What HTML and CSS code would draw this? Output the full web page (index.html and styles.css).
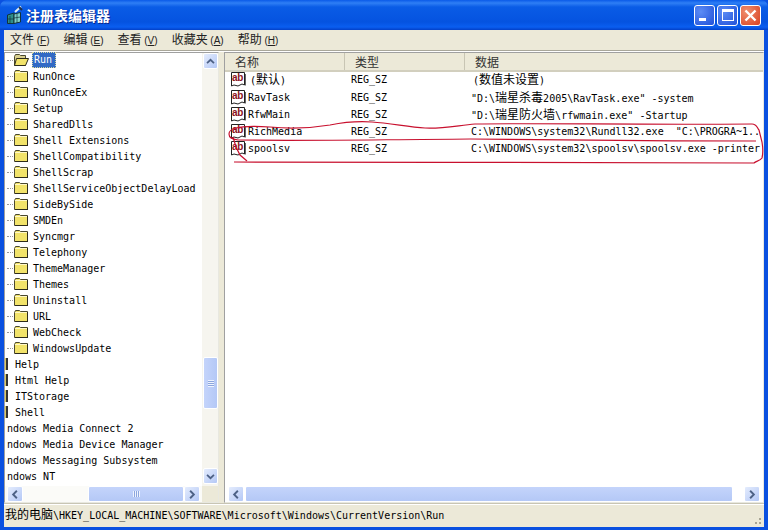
FILE: index.html
```html
<!DOCTYPE html>
<html lang="zh-CN">
<head>
  <meta charset="UTF-8">
  <title>注册表编辑器</title>
  <link rel="stylesheet" href="styles.css">
</head>
<body>

  <svg class="defs" width="0" height="0">
    <symbol id="folder" viewBox="0 0 16 14">
      <path d="M1.5 3.5V12.5H14.5V2.5H7.5L6.5 1.5H2.5Z" fill="#f2e36a" stroke="#4a4830"/>
      <path d="M2 3.5H14" stroke="#fff8c8"/>
      <path d="M14.5 3V13" stroke="#2e2c1c"/>
      <path d="M2 12.5H15" stroke="#2e2c1c"/>
    </symbol>
    <symbol id="folder-open" viewBox="0 0 16 14">
      <path d="M1.5 3.5V12.5H12.5V2.5H7.5L6.5 1.5H2.5Z" fill="#d8cf90" stroke="#4a4830"/>
      <path d="M3.5 5.5H15.5L12.5 12.5H1.5Z" fill="#f2e36a" stroke="#2e2c1c"/>
    </symbol>
    <symbol id="doc" viewBox="0 0 17 17">
      <path d="M1.5 1.5H14.5V14L12 13L8 15L4 14L1.5 15Z" fill="#fff" stroke="#222"/>
      <path d="M15.5 3V14.5" stroke="#666"/>
    </symbol>
    <symbol id="up" viewBox="0 0 15 15"><path d="M3.5 9.5L7.5 5.5L11.5 9.5" fill="none" stroke="#4d6185" stroke-width="2"/></symbol>
    <symbol id="down" viewBox="0 0 15 15"><path d="M3.5 5.5L7.5 9.5L11.5 5.5" fill="none" stroke="#4d6185" stroke-width="2"/></symbol>
    <symbol id="left" viewBox="0 0 15 15"><path d="M9.5 3.5L5.5 7.5L9.5 11.5" fill="none" stroke="#4d6185" stroke-width="2"/></symbol>
    <symbol id="right" viewBox="0 0 15 15"><path d="M5.5 3.5L9.5 7.5L5.5 11.5" fill="none" stroke="#4d6185" stroke-width="2"/></symbol>
  </svg>

  <div class="window">
    <div class="titlebar">
      <svg class="app-icon" width="18" height="20" viewBox="0 0 18 20">
        <path d="M1.5 10L8 8V18.5H1.5Z" fill="#2f8f8a" stroke="#12323a"/>
        <path d="M8 9L14.5 7.5V17L8 18.5Z" fill="#7fd0c8" stroke="#12323a"/>
        <path d="M4 11V18M1.5 14H8M11 9V18M8 13L14.5 12" stroke="#12323a" stroke-width=".7"/>
        <path d="M9 7L15 1.5" stroke="#e0eef4" stroke-width="2"/>
        <path d="M13 2L16 5" stroke="#20304a" stroke-width="2"/>
      </svg>
      <span class="title">注册表编辑器</span>
      <div class="caption-buttons">
        <div class="cap-btn"><span class="min-glyph"></span></div>
        <div class="cap-btn"><span class="max-glyph"></span></div>
        <div class="cap-btn close">
          <svg width="13" height="13" viewBox="0 0 13 13"><path d="M1.5 1.5L11.5 11.5M11.5 1.5L1.5 11.5" stroke="#fff" stroke-width="2.4"/></svg>
        </div>
      </div>
    </div>

    <div class="client">
      <div class="menubar">
        <span class="menu-item">文件 <small>(<u>F</u>)</small></span>
        <span class="menu-item">编辑 <small>(<u>E</u>)</small></span>
        <span class="menu-item">查看 <small>(<u>V</u>)</small></span>
        <span class="menu-item">收藏夹 <small>(<u>A</u>)</small></span>
        <span class="menu-item">帮助 <small>(<u>H</u>)</small></span>
      </div>

      <div class="panes">
        <div class="pane tree-pane">
          <div class="tree">
            <div class="row"><svg class="folder"><use href="#folder-open"/></svg><span class="selected">Run</span></div>
            <div class="row"><svg class="folder"><use href="#folder"/></svg><span>RunOnce</span></div>
            <div class="row"><svg class="folder"><use href="#folder"/></svg><span>RunOnceEx</span></div>
            <div class="row"><svg class="folder"><use href="#folder"/></svg><span>Setup</span></div>
            <div class="row"><svg class="folder"><use href="#folder"/></svg><span>SharedDlls</span></div>
            <div class="row"><svg class="folder"><use href="#folder"/></svg><span>Shell Extensions</span></div>
            <div class="row"><svg class="folder"><use href="#folder"/></svg><span>ShellCompatibility</span></div>
            <div class="row"><svg class="folder"><use href="#folder"/></svg><span>ShellScrap</span></div>
            <div class="row"><svg class="folder"><use href="#folder"/></svg><span>ShellServiceObjectDelayLoad</span></div>
            <div class="row"><svg class="folder"><use href="#folder"/></svg><span>SideBySide</span></div>
            <div class="row"><svg class="folder"><use href="#folder"/></svg><span>SMDEn</span></div>
            <div class="row"><svg class="folder"><use href="#folder"/></svg><span>Syncmgr</span></div>
            <div class="row"><svg class="folder"><use href="#folder"/></svg><span>Telephony</span></div>
            <div class="row"><svg class="folder"><use href="#folder"/></svg><span>ThemeManager</span></div>
            <div class="row"><svg class="folder"><use href="#folder"/></svg><span>Themes</span></div>
            <div class="row"><svg class="folder"><use href="#folder"/></svg><span>Uninstall</span></div>
            <div class="row"><svg class="folder"><use href="#folder"/></svg><span>URL</span></div>
            <div class="row"><svg class="folder"><use href="#folder"/></svg><span>WebCheck</span></div>
            <div class="row"><svg class="folder"><use href="#folder"/></svg><span>WindowsUpdate</span></div>
            <div class="row clipped"><i class="folder-edge"></i><span>Help</span></div>
            <div class="row clipped"><i class="folder-edge"></i><span>Html Help</span></div>
            <div class="row clipped"><i class="folder-edge"></i><span>ITStorage</span></div>
            <div class="row clipped"><i class="folder-edge"></i><span>Shell</span></div>
            <div class="row outer"><span>ndows Media Connect 2</span></div>
            <div class="row outer"><span>ndows Media Device Manager</span></div>
            <div class="row outer"><span>ndows Messaging Subsystem</span></div>
            <div class="row outer"><span>ndows NT</span></div>
          </div>
          <div class="vscroll">
            <div class="sb-btn"><svg><use href="#up"/></svg></div>
            <div class="vtrack"><div class="vthumb"><i class="grip-h"></i></div></div>
            <div class="sb-btn"><svg><use href="#down"/></svg></div>
          </div>
          <div class="hscroll tree-hscroll">
            <div class="sb-btn"><svg><use href="#left"/></svg></div>
            <div class="htrack"><div class="hthumb"><i class="grip-v"></i></div></div>
            <div class="sb-btn"><svg><use href="#right"/></svg></div>
          </div>
          <div class="corner"></div>
        </div>

        <div class="pane list-pane">
          <div class="list-header">
            <div class="col col-name">名称</div>
            <div class="col col-type">类型</div>
            <div class="col col-data">数据</div>
          </div>
          <div class="list">
            <div class="item"><span class="ab"><svg><use href="#doc"/></svg><b>ab</b></span><span class="name default-name">(<span class="cjk">默认</span>)</span><span class="type">REG_SZ</span><span class="data">(<span class="cjk">数值未设置</span>)</span></div>
            <div class="item"><span class="ab"><svg><use href="#doc"/></svg><b>ab</b></span><span class="name">RavTask</span><span class="type">REG_SZ</span><span class="data">"D:\<span class="cjk">瑞星杀毒</span>2005\RavTask.exe" -system</span></div>
            <div class="item"><span class="ab"><svg><use href="#doc"/></svg><b>ab</b></span><span class="name">RfwMain</span><span class="type">REG_SZ</span><span class="data">"D:\<span class="cjk">瑞星防火墙</span>\rfwmain.exe" -Startup</span></div>
            <div class="item"><span class="ab"><svg><use href="#doc"/></svg><b>ab</b></span><span class="name">RichMedia</span><span class="type">REG_SZ</span><span class="data">C:\WINDOWS\system32\Rundll32.exe  "C:\PROGRA~1..</span></div>
            <div class="item"><span class="ab"><svg><use href="#doc"/></svg><b>ab</b></span><span class="name">spoolsv</span><span class="type">REG_SZ</span><span class="data">C:\WINDOWS\system32\spoolsv\spoolsv.exe -printer</span></div>
          </div>
          <div class="hscroll list-hscroll">
            <div class="sb-btn"><svg><use href="#left"/></svg></div>
            <div class="htrack"><div class="hthumb"></div></div>
            <div class="sb-btn"><svg><use href="#right"/></svg></div>
          </div>
        </div>
      </div>

      <div class="statusbar">
        <span class="path"><span class="cjk">我的电脑</span>\HKEY_LOCAL_MACHINE\SOFTWARE\Microsoft\Windows\CurrentVersion\Run</span>
        <i class="size-grip"></i>
      </div>
    </div>

    <!-- hand drawn red marks around the last two values -->
    <svg class="scribble" width="768" height="530" viewBox="0 0 768 530">
      <path d="M236 128C243 126 256 126 270 127C290 129 312 128 330 125C345 122 358 121 372 122C390 123 408 127 425 128C440 129 455 126 475 124C540 123 640 125 752 124C757 124 757 128 759 130C760 134 761 138 762 142C763 148 763 154 762 158C760 161 756 161 754 163C700 163 400 162 234 162"
        fill="none" stroke="#c8102e" stroke-width="1.2"/>
      <path d="M236 128C231 129 229 132 229 134C229 138 232 139 238 140C300 141 345 140 470 139C560 140 660 141 756 141"
        fill="none" stroke="#c8102e" stroke-width="1.2"/>
      <path d="M233 137L236 147L240 155L247 161" fill="none" stroke="#c8102e" stroke-width="1.2"/>
    </svg>
  </div>

</body>
</html>
```

FILE: styles.css
```css
* {
  box-sizing: border-box;
}

html, body {
  margin: 0;
  height: 530px;
  overflow: hidden;
}

body {
  font-family: "DejaVu Sans Mono", "Noto Sans CJK SC", monospace;
  font-size: 10px;
  color: black;
}

.defs {
  position: absolute;
}

.window {
  position: relative;
  width: 768px;
  height: 530px;
  display: flex;
  flex-direction: column;
  background: #0a50e0;
}

/* title bar */
.titlebar {
  height: 30px;
  flex: none;
  display: flex;
  align-items: center;
  padding: 0 7px 0 6px;
  border-radius: 7px 7px 0 0;
  background: linear-gradient(#0a5ae8 0, #2f7ff5 3px, #0a5ce6 7px, #0553e0 22px, #0a5ef0 27px, #0340c8 30px);
}

.app-icon {
  flex: none;
  margin-right: 2px;
}

.title {
  font-family: "Noto Sans CJK SC", sans-serif;
  font-size: 14px;
  font-weight: bold;
  color: white;
  text-shadow: 1px 1px 0 #0a2a90;
}

.caption-buttons {
  margin-left: auto;
  display: flex;
  gap: 2px;
}

.cap-btn {
  width: 21px;
  height: 21px;
  border: 1px solid white;
  border-radius: 3px;
  background: radial-gradient(circle at 30% 30%, #5c8cf5, #2050d8);
  display: flex;
  align-items: center;
  justify-content: center;
  position: relative;
}

.cap-btn.close {
  background: radial-gradient(circle at 30% 30%, #f09070, #d84020);
}

.min-glyph {
  width: 7px;
  height: 3px;
  background: white;
  position: absolute;
  left: 4px;
  bottom: 4px;
}

.max-glyph {
  width: 12px;
  height: 12px;
  border: 1px solid white;
  border-top-width: 3px;
}

/* everything inside the window frame */
.client {
  flex: 1;
  min-height: 0;
  display: flex;
  flex-direction: column;
  margin: 0 4px 3px;
  background: #ece9d8;
}

.menubar {
  height: 20px;
  flex: none;
  display: flex;
  align-items: center;
  gap: 14px;
  padding: 0 0 2px 6px;
  font-family: "Noto Sans CJK SC", sans-serif;
  font-size: 12px;
  line-height: 1;
  color: #222;
}

.menu-item small {
  font-family: "Liberation Sans", sans-serif;
  font-size: 10px;
}

.panes {
  flex: 1;
  min-height: 0;
  display: flex;
  gap: 5px;
  border-top: 1px solid #a9a79a;
  box-shadow: inset 0 1px 0 white;
  padding-top: 1px;
}

.pane {
  background: white;
  border: 1px solid #a0a0a0;
  border-right-color: #e8e8e0;
  border-bottom-color: #e8e8e0;
  min-width: 0;
}

/* tree */
.tree-pane {
  width: 215px;
  flex: none;
  display: grid;
  grid-template-columns: 1fr 16px;
  grid-template-rows: 1fr 16px;
}

.tree {
  overflow: hidden;
  min-width: 0;
  margin-top: -1px;
}

.row {
  height: 16px;
  display: flex;
  align-items: center;
  padding-left: 8px;
  white-space: pre;
  position: relative;
}

.row::before {
  content: "";
  width: 6px;
  margin-left: -6px;
  border-bottom: 1px dotted #999;
  align-self: center;
}

.row.clipped::before, .row.outer::before {
  display: none;
}

.folder {
  width: 16px;
  height: 14px;
  flex: none;
  margin-right: 4px;
}

.selected {
  height: 16px;
  line-height: 16px;
  padding: 0 4px 0 2px;
  margin-left: -1px;
  background: #316ac5;
  color: white;
  outline: 1px dotted #d8d8a0;
  outline-offset: -1px;
}

.row.clipped {
  padding-left: 0;
}

.folder-edge {
  width: 3px;
  height: 12px;
  margin-right: 7px;
  background: #d8c860;
  border-right: 2px solid #333;
}

.row.outer {
  padding-left: 2px;
}

/* scrollbars */
.vscroll {
  grid-column: 2;
  grid-row: 1;
  display: flex;
  flex-direction: column;
  align-items: flex-end;
  background: #f6f5ef;
  padding-bottom: 2px;
}

.sb-btn {
  width: 16px;
  height: 16px;
  flex: none;
  border: 1px solid white;
  border-radius: 2px;
  background: linear-gradient(135deg, #e4ecfd, #b4c8f6);
  display: flex;
  align-items: center;
  justify-content: center;
}

.vscroll .sb-btn {
  width: 15px;
}

.sb-btn svg {
  width: 15px;
  height: 15px;
}

.vtrack {
  flex: 1;
  width: 15px;
}

.vthumb {
  height: 52px;
  margin-top: 288px;
  border: 1px solid white;
  border-radius: 2px;
  background: linear-gradient(90deg, #c4d4fb, #b4c8f6);
  display: flex;
  align-items: center;
  justify-content: center;
}

.grip-h {
  width: 6px;
  height: 7px;
  background: repeating-linear-gradient(#eef3fe 0 1px, #8ca6de 1px 2px);
}

.hscroll {
  display: flex;
  height: 16px;
  background: #fbfbf8;
}

.tree-hscroll {
  grid-column: 1;
  grid-row: 2;
  padding: 0 2px;
}

.htrack {
  flex: 1;
  min-width: 0;
}

.hthumb {
  height: 16px;
  border: 1px solid white;
  border-radius: 2px;
  background: linear-gradient(#c4d4fb, #b4c8f6);
  display: flex;
  align-items: center;
  justify-content: center;
}

.tree-hscroll .hthumb {
  width: 96px;
  margin-left: 65px;
}

.grip-v {
  width: 7px;
  height: 6px;
  background: repeating-linear-gradient(90deg, #eef3fe 0 1px, #8ca6de 1px 2px);
}

.corner {
  grid-column: 2;
  grid-row: 2;
  background: #ece9d8;
}

/* value list */
.list-pane {
  flex: 1;
  display: flex;
  flex-direction: column;
}

.list-header {
  height: 19px;
  flex: none;
  display: flex;
  background: #ece9d8;
  border-bottom: 2px solid #d2cfbe;
  font-family: "Noto Sans CJK SC", sans-serif;
  font-size: 12px;
  line-height: 17px;
  color: #333;
}

.col {
  padding-left: 10px;
  box-shadow: inset -2px 0 0 -1px #c8c5b4;
}

.col-name, .col-type {
  width: 120px;
}

.col-data {
  flex: 1;
  box-shadow: none;
}

.list {
  flex: 1;
  min-height: 0;
}

.item {
  height: 17px;
  display: flex;
  align-items: center;
  padding-left: 5px;
  white-space: pre;
}

.item:first-child {
  margin: -1px 0 1px;
}

.item:first-child .data {
  padding-left: 2px;
}

.ab {
  width: 17px;
  height: 17px;
  flex: none;
  position: relative;
}

.ab svg {
  width: 17px;
  height: 17px;
  display: block;
}

.ab b {
  position: absolute;
  left: 2px;
  top: 1px;
  font-family: "Liberation Sans", sans-serif;
  font-size: 10px;
  letter-spacing: -0.3px;
  line-height: 12px;
  color: #8c1020;
}

.name {
  width: 104px;
  flex: none;
  padding-left: 1px;
}

.default-name {
  padding-left: 3px;
}

.type {
  width: 120px;
  flex: none;
}

.data {
  font-variant-ligatures: none;
}

.list-hscroll {
  flex: none;
  padding: 0 3px;
  background: white;
}

.list-hscroll .htrack {
  padding: 0 11px 0 1px;
}

/* status bar */
.statusbar {
  height: 24px;
  flex: none;
  display: flex;
  align-items: center;
  padding: 0 0 2px 1px;
  border-top: 1px solid #c8c5b4;
  box-shadow: inset 0 1px 0 white;
  position: relative;
}

.cjk {
  font-family: "Noto Sans CJK SC", sans-serif;
  font-size: 12px;
  line-height: 12px;
}

.path {
  white-space: pre;
}

.size-grip {
  position: absolute;
  right: 1px;
  bottom: 1px;
  width: 12px;
  height: 12px;
  background: radial-gradient(circle at 1px 1px, #a8a594 1px, transparent 1.2px) 0 0 / 4px 4px;
  clip-path: polygon(100% 0, 100% 100%, 0 100%);
}

.scribble {
  position: absolute;
  left: 0;
  top: 0;
  pointer-events: none;
}
```
